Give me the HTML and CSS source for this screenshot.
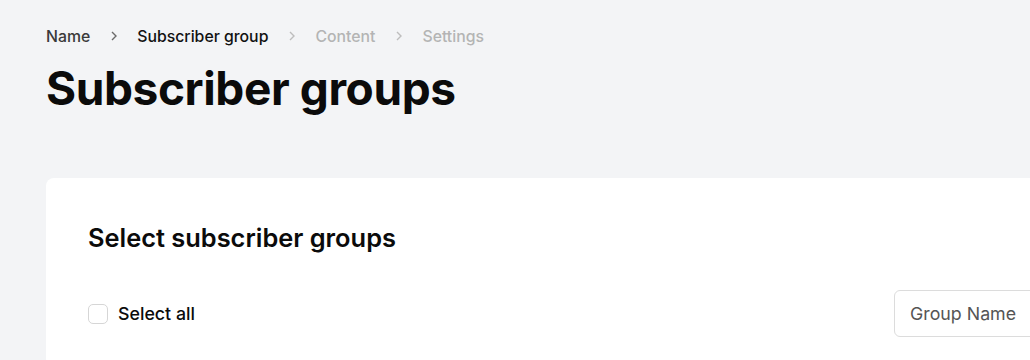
FILE: index.html
```html
<!DOCTYPE html>
<html lang="en">
<head>
  <meta charset="UTF-8">
  <meta name="viewport" content="width=device-width, initial-scale=1.0">
  <title>Subscriber groups</title>
  <link rel="stylesheet" href="styles.css">
</head>
<body>
  <div class="page">
    <nav class="breadcrumb">
      <span class="crumb crumb-done">Name</span>
      <svg class="crumb-sep" width="8" height="10" viewBox="0 0 8 10"><path d="M2 1l4 4-4 4" fill="none" stroke="currentColor" stroke-width="1.4"/></svg>
      <span class="crumb crumb-current">Subscriber group</span>
      <svg class="crumb-sep crumb-sep-light" width="8" height="10" viewBox="0 0 8 10"><path d="M2 1l4 4-4 4" fill="none" stroke="currentColor" stroke-width="1.4"/></svg>
      <span class="crumb crumb-next">Content</span>
      <svg class="crumb-sep crumb-sep-light" width="8" height="10" viewBox="0 0 8 10"><path d="M2 1l4 4-4 4" fill="none" stroke="currentColor" stroke-width="1.4"/></svg>
      <span class="crumb crumb-next">Settings</span>
    </nav>

    <h1 class="page-title">Subscriber groups</h1>

    <section class="card">
      <h2 class="card-title">Select subscriber groups</h2>
      <div class="toolbar">
        <label class="check">
          <input type="checkbox" class="check-box">
          <span>Select all</span>
        </label>
        <input type="text" class="search" placeholder="Group Name">
      </div>
    </section>
  </div>
</body>
</html>
```

FILE: styles.css
```css
body {
  font-family: Inter, "Noto Sans", sans-serif;
  margin: 0;
  padding: 0;
  background-color: #f3f4f6;
  color: #0b0b0b;
  overflow: hidden;
}

.page {
  width: 1100px;
  padding: 24px 0 0 46px;
}

.breadcrumb {
  display: flex;
  align-items: center;
  gap: 19.5px;
  font-size: 15.8px;
  font-weight: 500;
  height: 24px;
}

.crumb-done {
  color: #3a3a3a;
}

.crumb-current {
  color: #111;
}

.crumb-next {
  color: #b4b4b4;
}

.crumb-sep {
  color: #6a6a6a;
}

.crumb-sep-light {
  color: #bdbdbd;
}

.page-title {
  margin: 12px 0 0;
  font-size: 46px;
  font-weight: 700;
  line-height: 56px;
  letter-spacing: -0.4px;
}

.card {
  margin-top: 62px;
  background-color: white;
  border-radius: 8px;
  padding: 44px 42px 30px;
}

.card-title {
  margin: 0;
  font-size: 25.4px;
  font-weight: 600;
  line-height: 32px;
}

.toolbar {
  display: flex;
  align-items: center;
  justify-content: space-between;
  margin-top: 36px;
}

.check {
  display: flex;
  align-items: center;
  gap: 10px;
  font-size: 17.8px;
  font-weight: 500;
}

.check-box {
  appearance: none;
  margin: 0;
  width: 20px;
  height: 20px;
  border: 1px solid #d6d6d6;
  border-radius: 5px;
  background: white;
}

.search {
  width: 210px;
  height: 47px;
  box-sizing: border-box;
  border: 1px solid #dcdcdc;
  border-radius: 6px;
  padding: 0 15px;
  font-family: inherit;
  font-size: 17.8px;
}

.search::placeholder {
  color: #555;
}
```
